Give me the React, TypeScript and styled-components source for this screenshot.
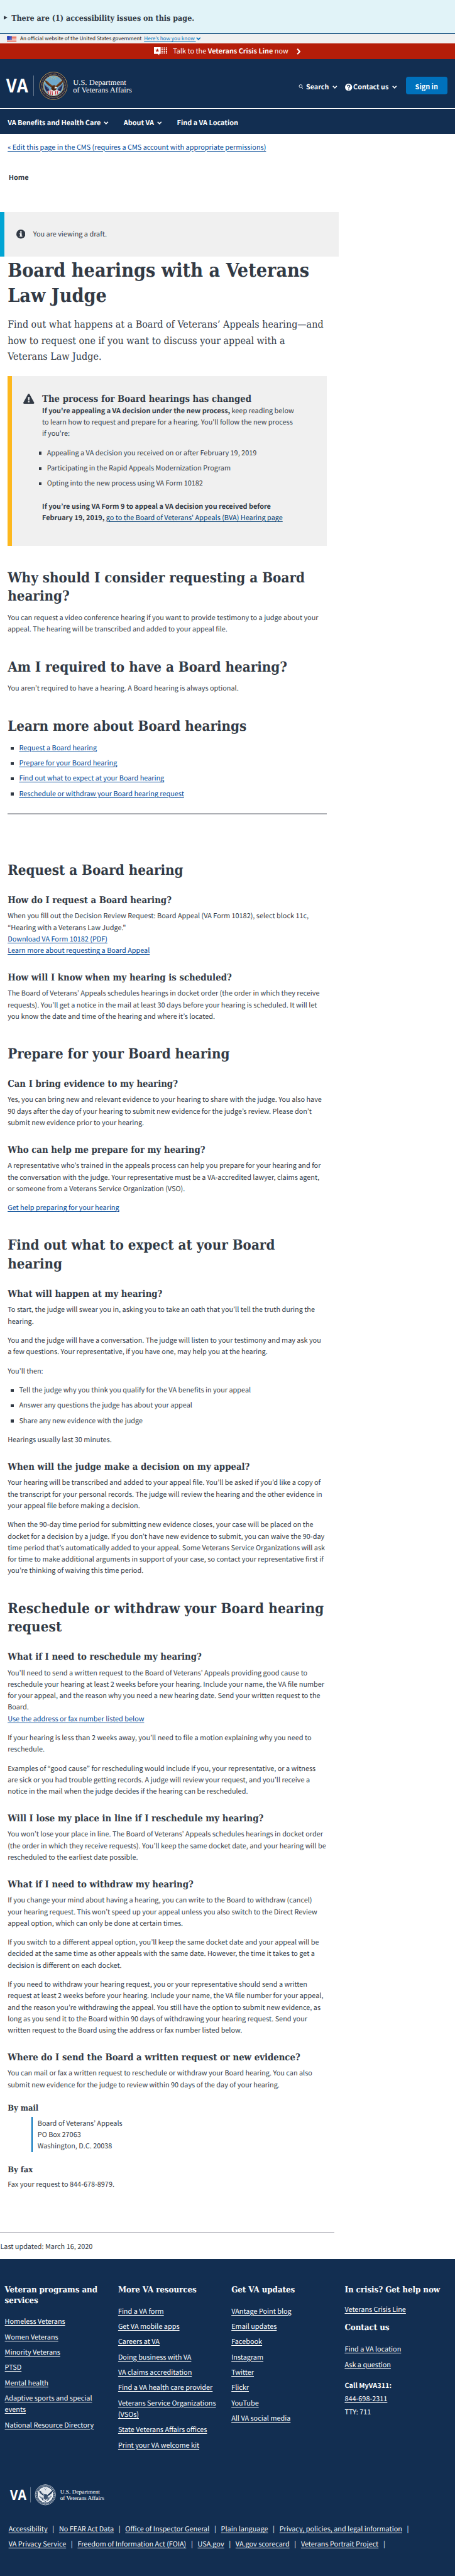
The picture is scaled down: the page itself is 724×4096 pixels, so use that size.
import React from 'react';
import styled, { createGlobalStyle } from 'styled-components';

const sans = '"Noto Sans CJK KR", "Noto Sans", sans-serif';
const slab = '"DejaVu Serif Condensed", "DejaVu Serif", serif';

const GlobalStyle = createGlobalStyle`
  html { font-size: 7.607px; }
  body {
    margin: 0;
    background: #fff;
    color: #323a45;
    font-family: ${sans};
    text-rendering: geometricPrecision;
    overflow-x: hidden;
  }
  #root { font-size: 1.432rem; line-height: 2.4rem; }
  h1, h2, h3, h4, p, ul { margin: 0; padding: 0; }
  ul { list-style: none; }
`;

const Page = styled.div`
  display: flex;
  flex-direction: column;
  min-height: 4096px;
  white-space: pre;
`;

const Link = styled.a<{ $tone?: string }>`
  color: ${(p) => p.$tone ?? '#004795'};
  text-decoration: underline;
  text-decoration-thickness: 1px;
  text-underline-offset: 0.2rem;
`;

/* ---------- Top bars ---------- */

const IssueBar = styled.div`
  display: flex;
  align-items: center;
  gap: 0.8rem;
  height: 7rem;
  padding: 0.6rem 0 0 0.8rem;
  box-sizing: border-box;
  background: #e1f3f8;
  font: 700 1.635rem/2.2rem ${slab};
`;

const Marker = styled.span`
  margin-bottom: 0.3rem;
  border-left: 0.9rem solid #323a45;
  border-top: 0.5rem solid transparent;
  border-bottom: 0.5rem solid transparent;
`;

const GovBar = styled.div`
  display: flex;
  align-items: center;
  height: 2rem;
  padding-left: 1.5rem;
  border-top: 0.2rem solid #003e73;
  background: #f0f0f0;
  color: #212121;
  font-size: 1.075rem;
  line-height: 2rem;
`;

const FlagIcon = styled.svg`
  width: 2rem;
  height: 1.4rem;
  margin-right: 0.7rem;
`;

const GovLink = styled(Link)`
  margin: 0 0 0 0.5rem;
`;

const Caret = styled.svg<{ $gap?: string }>`
  width: 1rem;
  height: 0.7rem;
  margin-left: ${(p) => p.$gap ?? '0.6rem'};
  fill: none;
  stroke: currentColor;
  stroke-width: 2.2;
`;

const CrisisBar = styled.div`
  display: flex;
  align-items: center;
  justify-content: center;
  height: 3.2rem;
  background: #b51d09;
  color: #fff;
`;

const CrisisIcon = styled.svg`
  width: 2.8rem;
  height: 1.7rem;
  margin-right: 1.2rem;
`;

const CrisisArrow = styled.svg`
  width: 0.9rem;
  height: 1.3rem;
  margin-left: 1.8rem;
`;

/* ---------- Header ---------- */

const Header = styled.header`
  background: #122e51;
  color: #fff;
  font-weight: 700;
`;

const HeaderTop = styled.div`
  display: flex;
  align-items: center;
  justify-content: space-between;
  height: 10.3rem;
  padding: 0 1.6rem 0 1.2rem;
  border-bottom: 1px solid #fff;
`;

const HeaderLogo = styled.svg`
  width: 27rem;
  height: 6rem;
  margin-top: 1.1rem;
`;

const Tools = styled.div`
  display: flex;
  align-items: center;
  padding-top: 1.2rem;
`;

const Tool = styled.div<{ $gap: string }>`
  display: flex;
  align-items: center;
  margin-right: ${(p) => p.$gap};
  padding-top: 0.2rem;
  font-size: 1.42rem;
`;

const SearchIcon = styled.svg`
  width: 1rem;
  height: 1rem;
  margin-right: 0.6rem;
`;

const HelpIcon = styled.svg`
  width: 1.5rem;
  height: 1.5rem;
  margin-right: 0.2rem;
`;

const SignIn = styled.button`
  width: 8.7rem;
  height: 3.6rem;
  margin-bottom: 0.4rem;
  padding: 0.2rem 0 0;
  border: 0;
  border-radius: 0.5rem;
  background: #0071bc;
  color: #fff;
  font: 700 1.432rem/2.4rem ${sans};
`;

const Nav = styled.nav`
  display: flex;
  align-items: center;
  gap: 3.2rem;
  height: 5.2rem;
  padding: 0.6rem 0 0 1.6rem;
  box-sizing: border-box;
`;

const NavItem = styled.div`
  display: flex;
  align-items: center;
`;

/* ---------- Article ---------- */

const EditRow = styled.div`
  padding: 1.62rem 1.6rem 0;
`;

const Crumb = styled.div`
  padding: 3.86rem 1.8rem 0;
  font-weight: 700;
`;

const Draft = styled.div`
  display: flex;
  align-items: center;
  width: 70.8rem;
  height: 9.4rem;
  margin-top: 6.02rem;
  padding-left: 2.5rem;
  box-sizing: border-box;
  border-left: 1rem solid #02a5d4;
  background: #f0f0f0;
`;

const InfoIcon = styled.svg`
  width: 1.9rem;
  height: 1.9rem;
  margin-right: 1.6rem;
`;

const Article = styled.article`
  width: 66.8rem;
  padding: 0.42rem 1.6rem 0;
`;

const Title = styled.h1`
  font: 700 3.977rem/5.2rem ${slab};
`;

const Lead = styled.p`
  margin-top: 1.61rem;
  font: 400 2.095rem/3.4rem ${slab};
`;

const Heading = styled.h2<{ $track?: string }>`
  margin-top: 4.86rem;
  font: 700 2.923rem/3.9rem ${slab};
  letter-spacing: ${(p) => p.$track ?? 'normal'};
`;

const SubHeading = styled.h3`
  font: 700 1.945rem/2.6rem ${slab};
  p + & { margin-top: 3.22rem; }
  ${Heading} + & { margin-top: 2.89rem; }
`;

const MinorHeading = styled.h4`
  margin-top: 2.77rem;
  font: 700 1.691rem/2.2rem ${slab};
`;

const Text = styled.p`
  p + &, ul + & { margin-top: 1.6rem; }
  ${Heading} + & { margin-top: 1.19rem; }
  ${SubHeading} + & { margin-top: 0.77rem; }
  ${MinorHeading} + & { margin-top: 0.66rem; }
`;

const Bullets = styled.ul`
  display: grid;
  gap: 0.8rem;
  padding-left: 0.7rem;
  p + & { margin-top: 1.6rem; }
  ${Heading} + & { margin-top: 1.25rem; }
`;

const Bullet = styled.li`
  display: flex;
  align-items: center;
  &::before {
    content: '';
    width: 0.55rem;
    height: 0.55rem;
    margin: 0.2rem 1.15rem 0 0;
    background: #323a45;
  }
`;

const Rule = styled.hr`
  height: 0.2rem;
  margin: 2.93rem 0 9.9rem;
  border: 0;
  background: #aeb0b5;
  & + ${Heading} { margin-top: 0; }
`;

const Warning = styled.section`
  display: flex;
  align-items: flex-start;
  height: 35.4rem;
  margin-top: 2.4rem;
  padding: 3.59rem 0 0 2.4rem;
  box-sizing: border-box;
  border-left: 1rem solid #fdb81e;
  background: #f0f0f0;
`;

const WarningIcon = styled.svg`
  width: 2.3rem;
  height: 2.1rem;
  margin: 0.05rem 1.6rem 0 0;
`;

const WarningTitle = styled.h3`
  font: 700 1.943rem/2.36rem ${slab};
`;

const WarningBullets = styled(Bullets)`
  margin-left: -1.4rem;
  margin-bottom: 2.4rem;
`;

const Address = styled.p`
  margin: 0.57rem 0 0 5rem;
  padding: 0.1rem 0 0 1rem;
  border-left: 0.3rem solid #0071bc;
`;

const Updated = styled.div`
  width: 70rem;
  margin-top: 8.71rem;
  padding: 1.69rem 0 1.51rem 0.05rem;
  border-top: 0.2rem solid #aeaeb8;
  box-sizing: border-box;
`;

/* ---------- Footer ---------- */

const Footer = styled.footer`
  flex: 1;
  background: #122e51;
  color: #fff;
`;

const Columns = styled.div`
  display: grid;
  grid-template-columns: repeat(4, 23.7rem);
  height: 46rem;
  padding: 5.43rem 0 0 1rem;
  box-sizing: border-box;
`;

const FooterHeading = styled.h2<{ $top?: string }>`
  margin-top: ${(p) => p.$top ?? '0'};
  font: 700 1.75rem/2.2rem ${slab};
  letter-spacing: -0.012rem;
`;

const FooterLinks = styled.ul<{ $top?: string }>`
  display: grid;
  gap: 0.8rem;
  margin-top: ${(p) => p.$top ?? '2rem'};
`;

const Phone = styled.div`
  display: grid;
  gap: 0.4rem;
  margin-top: 1.95rem;
`;

const FooterLogo = styled.svg`
  display: block;
  width: 20.3rem;
  height: 4.5rem;
  margin: 1rem 0 0 2rem;
`;

const LegalRow = styled.div`
  display: flex;
  margin: 0 0 0.8rem 1.8rem;
  ${FooterLogo} + & { margin-top: 3.62rem; }
`;

const Divider = styled.span`
  width: 2.4rem;
  text-align: center;
`;

const Down = ({ gap }: { gap?: string }) => (
  <Caret $gap={gap} viewBox="0 0 10 7"><path d="M1 1l4 4 4-4" /></Caret>
);

const Wordmark = ({ ring }: { ring: string }) => (
  <>
    <text x="1" y="43" fontFamily="Open Sans" fontWeight="700" fontSize="39.5" fill="#fff" textLength="46" lengthAdjust="spacingAndGlyphs">VA</text>
    <path d="M58.5 8v43" stroke={ring} strokeWidth="0.9" />
    <text x="141" y="27" fontFamily="Liberation Serif" fontWeight="400" fontSize="15.8" fill="#fff" textLength="111" lengthAdjust="spacingAndGlyphs">U.S. Department</text>
    <text x="141" y="43.5" fontFamily="Liberation Serif" fontWeight="400" fontSize="15.8" fill="#fff" textLength="123" lengthAdjust="spacingAndGlyphs">of Veterans Affairs</text>
  </>
);

const eagleWings = 'M82 18c2 8 8 11 15 15l2 5 5-1 3-4c7-4 12-8 14-15-4 1-7 3-10 7l-6 5-3-2-4 1-6-4c-3-4-6-6-10-7z';

const ColourSeal = () => (
  <g>
    <circle cx="100" cy="29.5" r="28.7" fill="#141b3c" stroke="#d7ab55" strokeWidth="1.1" />
    <circle cx="100" cy="29.5" r="24.6" fill="none" stroke="#c8a869" strokeWidth="3.2" strokeDasharray="1.2 1.5" opacity="0.75" />
    <circle cx="100" cy="29.5" r="21.2" fill="#6fa9cd" stroke="#d9b25c" strokeWidth="1.2" />
    <g fill="#e9cf5a">
      <circle cx="97" cy="12" r="1" /><circle cx="103" cy="12" r="1" /><circle cx="100" cy="14.5" r="1" />
      <circle cx="95" cy="15.5" r="1" /><circle cx="105" cy="15.5" r="1" />
    </g>
    <path d="M81 26l9 9 4 11c-8-2-13-9-13-20zM119 26l-9 9-4 11c8-2 13-9 13-20z" fill="#252b57" />
    <path d="M83 29l7 8M117 29l-7 8" stroke="#d9dce8" strokeDasharray="1 1.4" />
    <path d={eagleWings} fill="#5b3218" />
    <path d="M84 20l13 10M88 21l10 11M118 20l-13 10M114 21l-9 10" stroke="#8c5a31" strokeWidth="0.9" />
    <path d="M96 31h9l2 8-6 5-6-4z" fill="#4a2714" />
    <path d="M103 31l5 1-2 3h-4z" fill="#f4efe4" />
    <path d="M87 41l9-4 5 3 5-3 8 4-5 6-8 3-9-3z" fill="#e9e4e4" />
    <path d="M89 40l1 7M93 39l1 9M97 40l1 9M105 40l-1 8M109 40l-1 7" stroke="#c22f3b" strokeWidth="1.6" />
  </g>
);

const MonoSeal = () => (
  <g stroke="#fff" fill="none">
    <circle cx="100" cy="29.5" r="28.4" strokeWidth="1.2" />
    <circle cx="100" cy="29.5" r="24.6" strokeWidth="3.6" strokeDasharray="1.3 1.3" opacity="0.8" />
    <circle cx="100" cy="29.5" r="20.4" strokeWidth="2.4" fill="#dfe4ea" />
    <path d={eagleWings} fill="#122e51" stroke="none" />
    <path d="M84 20l13 11M89 22l9 11M117 20l-13 10M112 22l-8 10" strokeWidth="0.8" />
    <path d="M96 31h9l2 8-6 5-6-4z" fill="#3a506d" stroke="none" />
    <path d="M84 33l7 9 4 5M116 33l-7 9-4 5M90 36l4 7M110 36l-4 7" stroke="#122e51" strokeWidth="2" strokeDasharray="2 1" />
    <path d="M96 13h1.5M103 13h1.5M99.5 15.5h1.5" stroke="#122e51" strokeWidth="1.5" />
    <path d="M97 46l3 3 3-3" stroke="#122e51" strokeWidth="1.5" />
  </g>
);

const LinkList = ({ items, top }: { items: string[]; top?: string }) => (
  <FooterLinks $top={top}>
    {items.map((item) => <li key={item}><Link $tone="#fff">{item}</Link></li>)}
  </FooterLinks>
);

const Legal = ({ items }: { items: string[] }) => (
  <LegalRow>
    {items.map((item) => (
      <React.Fragment key={item}><Link $tone="#fff">{item}</Link><Divider>|</Divider></React.Fragment>
    ))}
  </LegalRow>
);

export default function App() {
  return (
    <Page>
      <GlobalStyle />
      <IssueBar><Marker />There are (1) accessibility issues on this page.</IssueBar>
      <GovBar>
        <FlagIcon viewBox="0 0 20 14">
          <rect width="20" height="14" fill="#fff" />
          <path d="M0 .7h20M0 3.5h20M0 6.3h20M0 9h20M0 11h20M0 13.3h20" stroke="#e2523d" strokeWidth="1.3" />
          <rect width="10" height="9" fill="#2a40b8" />
          <path d="M1.5 2h8M1.5 4.5h8M1.5 7h8" stroke="#fff" strokeDasharray="1 1.5" />
        </FlagIcon>
        An official website of the United States government
        <GovLink $tone="#0071bc">{'Here’s how you know '}</GovLink>
        <Link as="span" $tone="#0071bc"><Down gap="0" /></Link>
      </GovBar>
      <CrisisBar>
        <CrisisIcon viewBox="0 0 28 17" fill="#fff">
          <path d="M0 0h14v14h-3v3l-3-3H0z" />
          <path d="M7 2.5l1.2 3h3.3l-2.6 1.9 1 3.1L7 8.6l-2.9 1.9 1-3.1-2.6-1.9h3.3z" fill="#b51d09" />
          {[1.7, 5.4, 9, 12.3].map((y) => [17, 21.6, 26.2].map((x) => <circle key={`${x}-${y}`} cx={x} cy={y} r="1.5" />))}
        </CrisisIcon>
        <span>Talk to the <b>Veterans Crisis Line</b> now</span>
        <CrisisArrow viewBox="0 0 9 13"><path d="M1.5 1l5 5.5-5 5.5" fill="none" stroke="#fff" strokeWidth="2.8" /></CrisisArrow>
      </CrisisBar>

      <Header>
        <HeaderTop>
          <HeaderLogo viewBox="0 0 270 60"><Wordmark ring="#8f9bac" /><ColourSeal /></HeaderLogo>
          <Tools>
            <Tool $gap="1.6rem">
              <SearchIcon viewBox="0 0 10 10" fill="none" stroke="#fff" strokeWidth="1.2"><circle cx="4.5" cy="4" r="3.2" /><path d="M6.8 6.5L9.3 9.3" /></SearchIcon>
              Search<Down gap="0.8rem" />
            </Tool>
            <Tool $gap="1.8rem">
              <HelpIcon viewBox="0 0 15 15">
                <circle cx="7.5" cy="7.5" r="7.5" fill="#fff" />
                <path d="M5 5.8c0-3.3 5-3.2 5-.3 0 1.7-2.3 1.6-2.3 3.4M7.7 10.3v2.1" fill="none" stroke="#122e51" strokeWidth="2" />
              </HelpIcon>
              Contact us<Down gap="0.8rem" />
            </Tool>
            <SignIn>Sign in</SignIn>
          </Tools>
        </HeaderTop>
        <Nav>
          <NavItem>VA Benefits and Health Care<Down /></NavItem>
          <NavItem>About VA<Down /></NavItem>
          <NavItem>Find a VA Location</NavItem>
        </Nav>
      </Header>

      <EditRow><Link>« Edit this page in the CMS (requires a CMS account with appropriate permissions)</Link></EditRow>
      <Crumb>Home</Crumb>
      <Draft>
        <InfoIcon viewBox="0 0 19 19">
          <circle cx="9.5" cy="9.5" r="9.5" fill="#323a45" />
          <path d="M8 3.5h3.2v2.7H8zM6.8 7.7h4.4v5h1.3v2.1H6.8v-2.1H8V9.8H6.8z" fill="#fff" />
        </InfoIcon>
        You are viewing a draft.
      </Draft>

      <Article>
        <Title>{'Board hearings with a Veterans\nLaw Judge'}</Title>
        <Lead>{'Find out what happens at a Board of Veterans’ Appeals hearing—and\nhow to request one if you want to discuss your appeal with a\nVeterans Law Judge.'}</Lead>

        <Warning>
          <WarningIcon viewBox="0 0 23 21">
            <path d="M11.5 0c.8 0 1.3.4 1.7 1.1l9.5 17.3c.7 1.3 0 2.6-1.5 2.6H1.8C.3 21-.4 19.7.3 18.4L9.8 1.1C10.2.4 10.7 0 11.5 0z" fill="#323a45" />
            <path d="M9.8 7h3.5l-.5 6.8h-2.5zM10 15.2h3v3h-3z" fill="#f0f0f0" />
          </WarningIcon>
          <div>
            <WarningTitle>The process for Board hearings has changed</WarningTitle>
            <p>
              <b>If you're appealing a VA decision under the new process,</b>{' keep reading below'}<br />
              {"to learn how to request and prepare for a hearing. You'll follow the new process"}<br />
              {"if you're:"}
            </p>
            <WarningBullets>
              <Bullet>Appealing a VA decision you received on or after February 19, 2019</Bullet>
              <Bullet>Participating in the Rapid Appeals Modernization Program</Bullet>
              <Bullet>Opting into the new process using VA Form 10182</Bullet>
            </WarningBullets>
            <p>
              <b>If you’re using VA Form 9 to appeal a VA decision you received before</b><br />
              <b>February 19, 2019,</b> <Link $tone="#003e73">go to the Board of Veterans' Appeals (BVA) Hearing page</Link>
            </p>
          </div>
        </Warning>

        <Heading>{'Why should I consider requesting a Board\nhearing?'}</Heading>
        <Text>{'You can request a video conference hearing if you want to provide testimony to a judge about your\nappeal. The hearing will be transcribed and added to your appeal file.'}</Text>
        <Heading>Am I required to have a Board hearing?</Heading>
        <Text>You aren’t required to have a hearing. A Board hearing is always optional.</Text>
        <Heading>Learn more about Board hearings</Heading>
        <Bullets>
          <Bullet><Link>Request a Board hearing</Link></Bullet>
          <Bullet><Link>Prepare for your Board hearing</Link></Bullet>
          <Bullet><Link>Find out what to expect at your Board hearing</Link></Bullet>
          <Bullet><Link>Reschedule or withdraw your Board hearing request</Link></Bullet>
        </Bullets>
        <Rule />

        <Heading>Request a Board hearing</Heading>
        <SubHeading>How do I request a Board hearing?</SubHeading>
        <Text>
          {'When you fill out the Decision Review Request: Board Appeal (VA Form 10182), select block 11c,\n“Hearing with a Veterans Law Judge."\n'}
          <Link>Download VA Form 10182 (PDF)</Link>{'\n'}
          <Link>Learn more about requesting a Board Appeal</Link>
        </Text>
        <SubHeading>How will I know when my hearing is scheduled?</SubHeading>
        <Text>{'The Board of Veterans’ Appeals schedules hearings in docket order (the order in which they receive\nrequests). You’ll get a notice in the mail at least 30 days before your hearing is scheduled. It will let\nyou know the date and time of the hearing and where it’s located.'}</Text>

        <Heading>Prepare for your Board hearing</Heading>
        <SubHeading>Can I bring evidence to my hearing?</SubHeading>
        <Text>{'Yes, you can bring new and relevant evidence to your hearing to share with the judge. You also have\n90 days after the day of your hearing to submit new evidence for the judge’s review. Please don’t\nsubmit new evidence prior to your hearing.'}</Text>
        <SubHeading>Who can help me prepare for my hearing?</SubHeading>
        <Text>{'A representative who’s trained in the appeals process can help you prepare for your hearing and for\nthe conversation with the judge. Your representative must be a VA-accredited lawyer, claims agent,\nor someone from a Veterans Service Organization (VSO).'}</Text>
        <Text><Link>Get help preparing for your hearing</Link></Text>

        <Heading>{'Find out what to expect at your Board\nhearing'}</Heading>
        <SubHeading>What will happen at my hearing?</SubHeading>
        <Text>{'To start, the judge will swear you in, asking you to take an oath that you’ll tell the truth during the\nhearing.'}</Text>
        <Text>{'You and the judge will have a conversation. The judge will listen to your testimony and may ask you\na few questions. Your representative, if you have one, may help you at the hearing.'}</Text>
        <Text>You’ll then:</Text>
        <Bullets>
          <Bullet>Tell the judge why you think you qualify for the VA benefits in your appeal</Bullet>
          <Bullet>Answer any questions the judge has about your appeal</Bullet>
          <Bullet>Share any new evidence with the judge</Bullet>
        </Bullets>
        <Text>Hearings usually last 30 minutes.</Text>
        <SubHeading>When will the judge make a decision on my appeal?</SubHeading>
        <Text>{'Your hearing will be transcribed and added to your appeal file. You’ll be asked if you’d like a copy of\nthe transcript for your personal records. The judge will review the hearing and the other evidence in\nyour appeal file before making a decision.'}</Text>
        <Text>{'When the 90-day time period for submitting new evidence closes, your case will be placed on the\ndocket for a decision by a judge. If you don’t have new evidence to submit, you can waive the 90-day\ntime period that’s automatically added to your appeal. Some Veterans Service Organizations will ask\nfor time to make additional arguments in support of your case, so contact your representative first if\nyou’re thinking of waiving this time period.'}</Text>

        <Heading $track="0.026rem">{'Reschedule or withdraw your Board hearing\nrequest'}</Heading>
        <SubHeading>What if I need to reschedule my hearing?</SubHeading>
        <Text>
          {'You’ll need to send a written request to the Board of Veterans’ Appeals providing good cause to\nreschedule your hearing at least 2 weeks before your hearing. Include your name, the VA file number\nfor your appeal, and the reason why you need a new hearing date. Send your written request to the\nBoard.\n'}
          <Link>Use the address or fax number listed below</Link>
        </Text>
        <Text>{'If your hearing is less than 2 weeks away, you’ll need to file a motion explaining why you need to\nreschedule.'}</Text>
        <Text>{'Examples of “good cause” for rescheduling would include if you, your representative, or a witness\nare sick or you had trouble getting records. A judge will review your request, and you’ll receive a\nnotice in the mail when the judge decides if the hearing can be rescheduled.'}</Text>
        <SubHeading>Will I lose my place in line if I reschedule my hearing?</SubHeading>
        <Text>{'You won’t lose your place in line. The Board of Veterans’ Appeals schedules hearings in docket order\n(the order in which they receive requests). You’ll keep the same docket date, and your hearing will be\nrescheduled to the earliest date possible.'}</Text>
        <SubHeading>What if I need to withdraw my hearing?</SubHeading>
        <Text>{'If you change your mind about having a hearing, you can write to the Board to withdraw (cancel)\nyour hearing request. This won’t speed up your appeal unless you also switch to the Direct Review\nappeal option, which can only be done at certain times.'}</Text>
        <Text>{'If you switch to a different appeal option, you’ll keep the same docket date and your appeal will be\ndecided at the same time as other appeals with the same date. However, the time it takes to get a\ndecision is different on each docket.'}</Text>
        <Text>{'If you need to withdraw your hearing request, you or your representative should send a written\nrequest at least 2 weeks before your hearing. Include your name, the VA file number for your appeal,\nand the reason you’re withdrawing the appeal. You still have the option to submit new evidence, as\nlong as you send it to the Board within 90 days of withdrawing your hearing request. Send your\nwritten request to the Board using the address or fax number listed below.'}</Text>
        <SubHeading>Where do I send the Board a written request or new evidence?</SubHeading>
        <Text>{'You can mail or fax a written request to reschedule or withdraw your Board hearing. You can also\nsubmit new evidence for the judge to review within 90 days of the day of your hearing.'}</Text>
        <MinorHeading>By mail</MinorHeading>
        <Address>{'Board of Veterans’ Appeals\nPO Box 27063\nWashington, D.C. 20038'}</Address>
        <MinorHeading>By fax</MinorHeading>
        <Text>Fax your request to 844-678-8979.</Text>
      </Article>
      <Updated>Last updated: March 16, 2020</Updated>

      <Footer>
        <Columns>
          <div>
            <FooterHeading>{'Veteran programs and\nservices'}</FooterHeading>
            <LinkList items={['Homeless Veterans', 'Women Veterans', 'Minority Veterans', 'PTSD', 'Mental health', 'Adaptive sports and special\nevents', 'National Resource Directory']} />
          </div>
          <div>
            <FooterHeading>More VA resources</FooterHeading>
            <LinkList items={['Find a VA form', 'Get VA mobile apps', 'Careers at VA', 'Doing business with VA', 'VA claims accreditation', 'Find a VA health care provider', 'Veterans Service Organizations\n(VSOs)', 'State Veterans Affairs offices', 'Print your VA welcome kit']} />
          </div>
          <div>
            <FooterHeading>Get VA updates</FooterHeading>
            <LinkList items={['VAntage Point blog', 'Email updates', 'Facebook', 'Instagram', 'Twitter', 'Flickr', 'YouTube', 'All VA social media']} />
          </div>
          <div>
            <FooterHeading>In crisis? Get help now</FooterHeading>
            <LinkList top="1.6rem" items={['Veterans Crisis Line']} />
            <FooterHeading $top="1.7rem">Contact us</FooterHeading>
            <LinkList top="2.05rem" items={['Find a VA location', 'Ask a question']} />
            <Phone>
              <b>Call MyVA311:</b>
              <Link $tone="#fff">844-698-2311</Link>
              <span>TTY: 711</span>
            </Phone>
          </div>
        </Columns>
        <FooterLogo viewBox="0 0 270 60"><Wordmark ring="#b9c2cd" /><MonoSeal /></FooterLogo>
        <Legal items={['Accessibility', 'No FEAR Act Data', 'Office of Inspector General', 'Plain language', 'Privacy, policies, and legal information']} />
        <Legal items={['VA Privacy Service', 'Freedom of Information Act (FOIA)', 'USA.gov', 'VA.gov scorecard', 'Veterans Portrait Project']} />
      </Footer>
    </Page>
  );
}
